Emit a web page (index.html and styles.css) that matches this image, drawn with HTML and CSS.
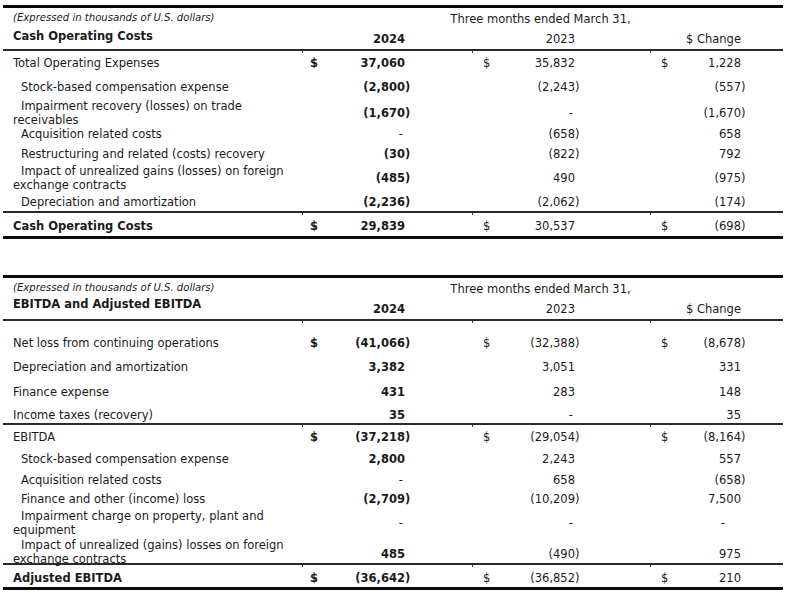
FILE: index.html
```html
<!DOCTYPE html>
<html>
<head>
<meta charset="utf-8">
<link rel="stylesheet" href="styles.css">
</head>
<body>
<div class="page">
  <section class="tbl">
    <div class="hdr">
      <div class="note">(Expressed in thousands of U.S. dollars)</div>
      <div class="period">Three months ended March 31,</div>
      <div class="title">Cash Operating Costs</div>
      <div class="yr y1">2024</div>
      <div class="yr y2">2023</div>
      <div class="yr y3">$ Change</div>
    </div>
    <div class="row h24 tick">
      <div class="lbl">Total Operating Expenses</div>
      <div class="c c1 b"><span class="d">$</span><span class="n">37,060</span></div>
      <div class="c c2"><span class="d">$</span><span class="n">35,832</span></div>
      <div class="c c3"><span class="d">$</span><span class="n">1,228</span></div>
    </div>
    <div class="row h24">
      <div class="lbl in">Stock-based compensation expense</div>
      <div class="c c1 b"><span class="n">(2,800<span class="rp">)</span></span></div>
      <div class="c c2"><span class="n">(2,243<span class="rp">)</span></span></div>
      <div class="c c3"><span class="n">(557<span class="rp">)</span></span></div>
    </div>
    <div class="row h24">
      <div class="lbl two">Impairment recovery (losses) on trade<br>receivables</div>
      <div class="c c1 b"><span class="n">(1,670<span class="rp">)</span></span></div>
      <div class="c c2"><span class="n dash">-</span></div>
      <div class="c c3"><span class="n">(1,670<span class="rp">)</span></span></div>
    </div>
    <div class="row h21">
      <div class="lbl in">Acquisition related costs</div>
      <div class="c c1 b"><span class="n dash">-</span></div>
      <div class="c c2"><span class="n">(658<span class="rp">)</span></span></div>
      <div class="c c3"><span class="n">658</span></div>
    </div>
    <div class="row h20">
      <div class="lbl in">Restructuring and related (costs) recovery</div>
      <div class="c c1 b"><span class="n">(30<span class="rp">)</span></span></div>
      <div class="c c2"><span class="n">(822<span class="rp">)</span></span></div>
      <div class="c c3"><span class="n">792</span></div>
    </div>
    <div class="row h26">
      <div class="lbl two">Impact of unrealized gains (losses) on foreign<br>exchange contracts</div>
      <div class="c c1 b"><span class="n">(485<span class="rp">)</span></span></div>
      <div class="c c2"><span class="n">490</span></div>
      <div class="c c3"><span class="n">(975<span class="rp">)</span></span></div>
    </div>
    <div class="row h21 low">
      <div class="lbl in">Depreciation and amortization</div>
      <div class="c c1 b"><span class="n">(2,236<span class="rp">)</span></span></div>
      <div class="c c2"><span class="n">(2,062<span class="rp">)</span></span></div>
      <div class="c c3"><span class="n">(174<span class="rp">)</span></span></div>
    </div>
    <div class="row sep total tick">
      <div class="lbl b">Cash Operating Costs</div>
      <div class="c c1 b"><span class="d">$</span><span class="n">29,839</span></div>
      <div class="c c2"><span class="d">$</span><span class="n">30,537</span></div>
      <div class="c c3"><span class="d">$</span><span class="n">(698<span class="rp">)</span></span></div>
    </div>
  </section>

  <section class="tbl second">
    <div class="hdr">
      <div class="note">(Expressed in thousands of U.S. dollars)</div>
      <div class="period">Three months ended March 31,</div>
      <div class="title up">EBITDA and Adjusted EBITDA</div>
      <div class="yr y1">2024</div>
      <div class="yr y2">2023</div>
      <div class="yr y3">$ Change</div>
    </div>
    <div class="row h24 first tick">
      <div class="lbl">Net loss from continuing operations</div>
      <div class="c c1 b"><span class="d">$</span><span class="n">(41,066<span class="rp">)</span></span></div>
      <div class="c c2"><span class="d">$</span><span class="n">(32,388<span class="rp">)</span></span></div>
      <div class="c c3"><span class="d">$</span><span class="n">(8,678<span class="rp">)</span></span></div>
    </div>
    <div class="row h24">
      <div class="lbl">Depreciation and amortization</div>
      <div class="c c1 b"><span class="n">3,382</span></div>
      <div class="c c2"><span class="n">3,051</span></div>
      <div class="c c3"><span class="n">331</span></div>
    </div>
    <div class="row h25">
      <div class="lbl">Finance expense</div>
      <div class="c c1 b"><span class="n">431</span></div>
      <div class="c c2"><span class="n">283</span></div>
      <div class="c c3"><span class="n">148</span></div>
    </div>
    <div class="row h19 low">
      <div class="lbl">Income taxes (recovery)</div>
      <div class="c c1 b"><span class="n">35</span></div>
      <div class="c c2"><span class="n dash">-</span></div>
      <div class="c c3"><span class="n">35</span></div>
    </div>
    <div class="row sep h23 tick">
      <div class="lbl">EBITDA</div>
      <div class="c c1 b"><span class="d">$</span><span class="n">(37,218<span class="rp">)</span></span></div>
      <div class="c c2"><span class="d">$</span><span class="n">(29,054<span class="rp">)</span></span></div>
      <div class="c c3"><span class="d">$</span><span class="n">(8,164<span class="rp">)</span></span></div>
    </div>
    <div class="row h22">
      <div class="lbl in">Stock-based compensation expense</div>
      <div class="c c1 b"><span class="n">2,800</span></div>
      <div class="c c2"><span class="n">2,243</span></div>
      <div class="c c3"><span class="n">557</span></div>
    </div>
    <div class="row h19">
      <div class="lbl in">Acquisition related costs</div>
      <div class="c c1 b"><span class="n dash">-</span></div>
      <div class="c c2"><span class="n">658</span></div>
      <div class="c c3"><span class="n">(658<span class="rp">)</span></span></div>
    </div>
    <div class="row h20">
      <div class="lbl in">Finance and other (income) loss</div>
      <div class="c c1 b"><span class="n">(2,709<span class="rp">)</span></span></div>
      <div class="c c2"><span class="n">(10,209<span class="rp">)</span></span></div>
      <div class="c c3"><span class="n">7,500</span></div>
    </div>
    <div class="row h27">
      <div class="lbl two">Impairment charge on property, plant and<br>equipment</div>
      <div class="c c1 b"><span class="n dash">-</span></div>
      <div class="c c2"><span class="n dash">-</span></div>
      <div class="c c3"><span class="n dash mid">-</span></div>
    </div>
    <div class="row h27 drop">
      <div class="lbl two">Impact of unrealized (gains) losses on foreign<br>exchange contracts</div>
      <div class="c c1 b"><span class="n">485</span></div>
      <div class="c c2"><span class="n">(490<span class="rp">)</span></span></div>
      <div class="c c3"><span class="n">975</span></div>
    </div>
    <div class="row sep total adj tick">
      <div class="lbl b">Adjusted EBITDA</div>
      <div class="c c1 b"><span class="d">$</span><span class="n">(36,642<span class="rp">)</span></span></div>
      <div class="c c2"><span class="d">$</span><span class="n">(36,852<span class="rp">)</span></span></div>
      <div class="c c3"><span class="d">$</span><span class="n">210</span></div>
    </div>
  </section>
</div>
</body>
</html>
```

FILE: styles.css
```css
html, body {
  margin: 0;
  padding: 0;
  background: #ffffff;
}

body {
  font-family: "DejaVu Sans", Verdana, sans-serif;
  font-size: 11.5px;
  line-height: 14px;
  color: #1a1a1a;
}

.page {
  padding: 5px 0 0 3px;
}

.tbl {
  width: 780px;
  border-top: 3px solid #0a0a0a;
  border-bottom: 3px solid #0a0a0a;
}

.tbl.second {
  margin-top: 36px;
}

.hdr,
.row {
  display: grid;
  grid-template-columns: 299px 170px 178px 133px;
}

.hdr {
  grid-template-rows: 20px 21px;
  border-bottom: 2px solid #2a2a2a;
}

.note {
  font-style: italic;
  font-size: 10.1px;
  padding-left: 10px;
  align-self: center;
}

.period {
  grid-column: 2 / 5;
  text-align: center;
  align-self: center;
  padding-top: 2px;
  padding-right: 4px;
}

.title {
  font-weight: bold;
  padding-left: 10px;
  align-self: start;
  padding-top: 1px;
}

.title.up {
  padding-top: 0;
  margin-top: -1px;
}

.yr {
  align-self: end;
  text-align: right;
  padding-bottom: 3px;
}

.y1 {
  font-weight: bold;
  padding-right: 67px;
}

.y2 {
  padding-right: 75px;
}

.y3 {
  padding-right: 42px;
}

.row {
  align-items: center;
}

.row.tick {
  background-image:
    linear-gradient(#3a3a3a, #3a3a3a),
    linear-gradient(#3a3a3a, #3a3a3a),
    linear-gradient(#3a3a3a, #3a3a3a);
  background-size: 1px 2px;
  background-repeat: no-repeat;
  background-position: 299px 0, 469px 0, 647px 0;
}

.h19 { height: 19px; }
.h20 { height: 20px; }
.h21 { height: 21px; }
.h22 { height: 22px; }
.h23 { height: 23px; }
.h24 { height: 24px; }
.h25 { height: 25px; }
.h26 { height: 26px; }
.h27 { height: 27px; }

.row.low {
  padding-top: 2px;
}

.row.low.h21 { height: 19px; }
.row.low.h19 { height: 17px; }

.row.first {
  padding-top: 10px;
}

.row.drop {
  padding-top: 2px;
  height: 25px;
}

.row.drop .c {
  padding-top: 3px;
}

.row.sep {
  border-top: 2px solid #2a2a2a;
}

.row.total {
  height: 20px;
  padding-top: 3px;
}

.row.adj {
  height: 19px;
}

.lbl {
  padding-left: 10px;
  white-space: nowrap;
}

.lbl.in {
  padding-left: 18px;
}

.lbl.two {
  text-indent: 8px;
}

.b {
  font-weight: bold;
}

.c {
  display: flex;
  align-items: center;
}

.c1 { padding: 0 67px 0 8px; }
.c2 { padding: 0 75px 0 11px; }
.c3 { padding: 0 42px 0 11px; }

.n {
  margin-left: auto;
  white-space: nowrap;
}

.rp {
  display: inline-block;
  width: 0;
}

.dash {
  margin-right: 2px;
  font-weight: normal;
}

.dash.mid {
  margin-right: 16px;
}
```
